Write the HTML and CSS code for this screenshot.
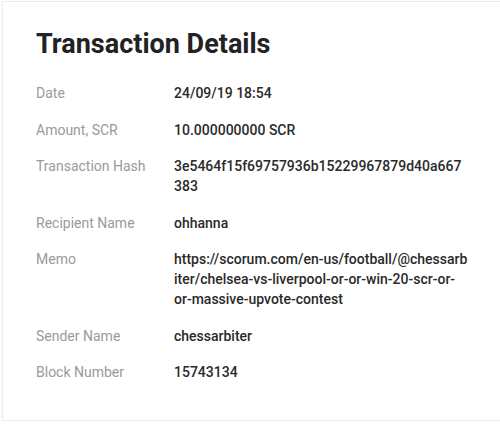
FILE: index.html
```html
<!DOCTYPE html>
<html>
<head>
<meta charset="utf-8">
<link rel="stylesheet" href="styles.css">
</head>
<body>
<div class="card">
  <h1 class="title">Transaction Details</h1>
  <dl class="details">
    <dt>Date</dt><dd>24/09/19 18:54</dd>
    <dt>Amount, SCR</dt><dd>10.000000000 SCR</dd>
    <dt>Transaction Hash</dt><dd>3e5464f15f69757936b15229967879d40a667383</dd>
    <dt>Recipient Name</dt><dd>ohhanna</dd>
    <dt>Memo</dt><dd>https://scorum.com/en-us/football/@chessarbiter/chelsea-vs-liverpool-or-or-win-20-scr-or-<br>or-massive-upvote-contest</dd>
    <dt>Sender Name</dt><dd>chessarbiter</dd>
    <dt>Block Number</dt><dd>15743134</dd>
  </dl>
</div>
</body>
</html>
```

FILE: styles.css
```css
html, body {
  margin: 0;
  padding: 0;
  background: #ffffff;
}
body {
  font-family: Roboto, "Liberation Sans", sans-serif;
  padding: 1px 0 0 2px;
}
.card {
  box-sizing: border-box;
  width: 510px;
  height: 420px;
  background: #fff;
  border: 1px solid #ececec;
  box-shadow: 0 1px 2px rgba(0,0,0,0.06);
  padding: 26px 0 0 33px;
}
.title {
  margin: 0;
  font-size: 27px;
  line-height: 32px;
  font-weight: 700;
  color: #222;
}
.details {
  margin: 23px 0 0 0;
  display: grid;
  grid-template-columns: 138px 294px;
  row-gap: 16.5px;
  font-size: 14px;
  line-height: 20px;
}
.details dt {
  color: #9a9a9a;
  font-weight: 400;
}
.details dd {
  margin: 0;
  color: #2a2a2a;
  font-weight: 500;
  word-break: break-all;
}
```
